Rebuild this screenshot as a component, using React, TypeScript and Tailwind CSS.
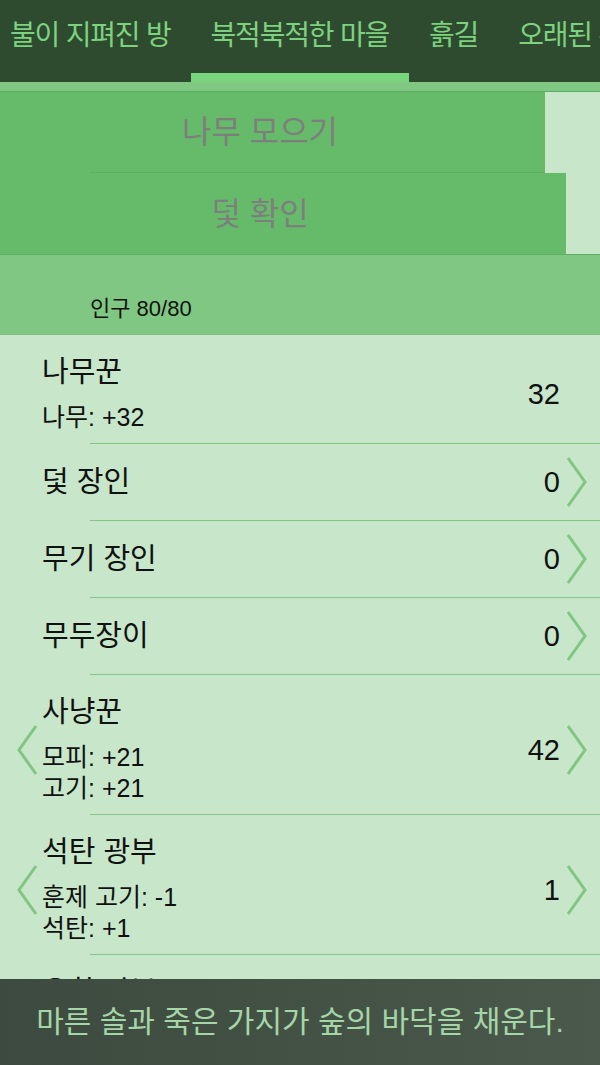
import React from 'react';

const tabs = ['불이 지펴진 방', '북적북적한 마을', '흙길', '오래된 우주선'];

type Worker = {
  name: string;
  count: number;
  subs?: string[];
  left?: boolean;
  right?: boolean;
};

const workers: Worker[] = [
  { name: '나무꾼', count: 32, subs: ['나무: +32'] },
  { name: '덫 장인', count: 0, right: true },
  { name: '무기 장인', count: 0, right: true },
  { name: '무두장이', count: 0, right: true },
  { name: '사냥꾼', count: 42, subs: ['모피: +21', '고기: +21'], left: true, right: true },
  { name: '석탄 광부', count: 1, subs: ['훈제 고기: -1', '석탄: +1'], left: true, right: true },
  { name: '유황 광부', count: 0, subs: ['훈제 고기: -1', '유황: +1'], left: true, right: true },
];

function Chevron({ dir }: { dir: 'left' | 'right' }) {
  const points = dir === 'right' ? '2,2 19,26 2,50' : '19,2 2,26 19,50';
  return (
    <svg width="21" height="52" viewBox="0 0 21 52" className="block">
      <polyline points={points} fill="none" stroke="#7fc683" strokeWidth="3" />
    </svg>
  );
}

function WorkerRow({ w }: { w: Worker }) {
  const tall = !!w.subs;
  return (
    <div>
      <div className={`flex items-center ${tall ? 'pt-[20px] pb-[10px]' : 'h-[76px]'}`}>
        <div className="w-[42px] shrink-0 pl-[17px]">{w.left && <Chevron dir="left" />}</div>
        <div className="flex-1">
          <div className="text-[29px] leading-[34px] text-[#111]">{w.name}</div>
          {w.subs && (
            <div className="mt-[13px]">
              {w.subs.map((s) => (
                <div key={s} className="text-[25px] leading-[31px] text-[#111]">
                  {s}
                </div>
              ))}
            </div>
          )}
        </div>
        <div className="text-[29px] leading-[34px] text-[#111]">{w.count}</div>
        <div className="w-[21px] ml-[6px] mr-[13px] shrink-0">{w.right && <Chevron dir="right" />}</div>
      </div>
      <div className="ml-[90px] h-px bg-[#81c784]" />
    </div>
  );
}

export default function App() {
  return (
    <div
      className="relative w-[600px] h-[1065px] overflow-hidden bg-[#c8e6c9]"
      style={{ fontFamily: '"Liberation Sans", "Noto Sans CJK KR", sans-serif' }}
    >
      {/* Location tabs */}
      <nav className="h-[82px] bg-[#2e4b30] flex -ml-[10px] overflow-hidden whitespace-nowrap">
        {tabs.map((t, i) => (
          <div key={t} className="flex flex-col px-5 shrink-0">
            <div className="pt-[19px] text-[28px] leading-[34px] tracking-[-1.2px] text-[#7dd27f]">{t}</div>
            {i === 1 && <div className="mt-auto -mx-5 h-[9px] bg-[#79d67d]" />}
          </div>
        ))}
      </nav>
      <div className="h-[10px] bg-[#81c784] border-b border-[#5cae61]" />

      {/* Actions */}
      <div className="bg-[#66bb6a]">
        <div className="flex h-[81px]">
          <div className="flex-1 flex flex-col">
            <div className="flex-1 flex items-center">
              <span className="w-[520px] text-center text-[32px] leading-[38px] text-[#7e7e7e]">나무 모으기</span>
            </div>
            <div className="ml-[90px] h-px bg-[#5cae61]" />
          </div>
          <div className="w-[55px] bg-[#c8e6c9]" />
        </div>
        <div className="flex h-[82px] border-b border-[#5cae61]">
          <div className="flex-1 flex items-center">
            <span className="w-[520px] text-center text-[32px] leading-[38px] text-[#7e7e7e]">덫 확인</span>
          </div>
          <div className="w-[34px] bg-[#c8e6c9]" />
        </div>
      </div>

      {/* Population */}
      <div className="h-[80px] bg-[#81c784] flex items-end pb-[12px] pl-[90px] border-b border-[#7cbf80]">
        <span className="text-[22px] leading-[26px] text-[#111]">인구 80/80</span>
      </div>

      {/* Workers */}
      <div>
        {workers.map((w) => (
          <WorkerRow key={w.name} w={w} />
        ))}
      </div>

      {/* Notification */}
      <div className="absolute bottom-0 left-0 right-0 h-[86px] bg-linear-to-r from-[#3d4a3f] to-[#4a594c] flex items-center justify-center">
        <span className="text-[30px] leading-[36px] text-[#a5d6a7] whitespace-nowrap">
          마른 솔과 죽은 가지가 숲의 바닥을 채운다.
        </span>
      </div>
    </div>
  );
}
